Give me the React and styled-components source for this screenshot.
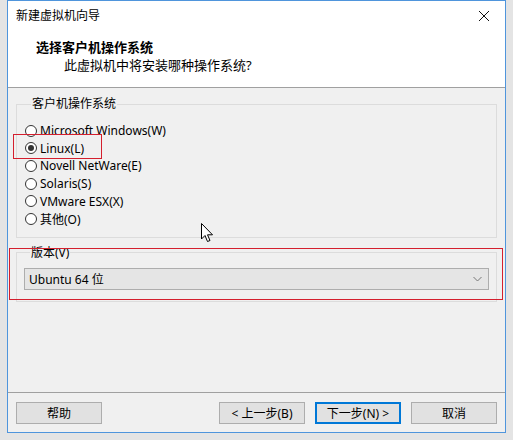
import React, { useState } from "react";
import styled, { createGlobalStyle } from "styled-components";

const GlobalStyle = createGlobalStyle`
  html, body {
    margin: 0;
    padding: 0;
    background: #e4e4e4;
  }
  body {
    font-family: "Noto Sans", "Noto Sans CJK SC", sans-serif;
    font-size: 12px;
    color: #000;
  }
`;

const osList = [
  "Microsoft Windows(W)",
  "Linux(L)",
  "Novell NetWare(E)",
  "Solaris(S)",
  "VMware ESX(X)",
  "其他(O)",
];

const Page = styled.div`
  width: 513px;
  height: 440px;
  overflow: hidden;
  background: #e4e4e4;
`;

const Window = styled.div`
  position: relative;
  box-sizing: border-box;
  margin-left: 7px;
  width: 499px;
  height: 433px;
  border: 1px solid #4f95dc;
  background: #f0f0f0;
  display: flex;
  flex-direction: column;
`;

const TitleBar = styled.div`
  height: 29px;
  background: #fff;
  display: flex;
  align-items: center;
  justify-content: space-between;
  padding: 0 8px 0 8px;
  font-size: 12px;
  line-height: 1;
`;

const CloseBtn = styled.svg`
  width: 12px;
  height: 12px;
  margin-right: 7px;
`;

const Header = styled.div`
  height: 58px;
  background: #fff;
  border-bottom: 1px solid #a0a0a0;
  box-sizing: border-box;
  display: flex;
  flex-direction: column;
  padding: 9px 0 0 28px;
`;

const HeaderTitle = styled.div`
  font-weight: bold;
  font-size: 13px;
  line-height: 16px;
`;

const HeaderSub = styled.div`
  font-size: 13px;
  line-height: 16px;
  margin-top: 2px;
  padding-left: 28px;
`;

const Body = styled.div`
  flex: 1;
  padding: 9px 8px 0 8px;
  display: flex;
  flex-direction: column;
  gap: 8px;
`;

const Group = styled.fieldset`
  margin: 0;
  border: 1px solid #dcdcdc;
  padding: ${(p) => p.$pad};
  min-inline-size: 0;
`;

const Legend = styled.legend`
  margin-left: 6px;
  padding: 0 1px;
  font-size: 12px;
  line-height: 14px;
`;

const RadioRow = styled.label`
  display: flex;
  align-items: center;
  height: 17.6px;
  gap: 3px;
  white-space: nowrap;
`;

const RadioDot = styled.span`
  box-sizing: border-box;
  width: 12px;
  height: 12px;
  border-radius: 50%;
  border: 1px solid #333;
  background: #fff;
  display: flex;
  align-items: center;
  justify-content: center;

  &::after {
    content: "";
    width: 6px;
    height: 6px;
    border-radius: 50%;
    background: ${(p) => (p.$on ? "#333" : "transparent")};
  }
`;

const Combo = styled.div`
  box-sizing: border-box;
  height: 22px;
  background: #e5e5e5;
  border: 1px solid #adadad;
  display: flex;
  align-items: center;
  justify-content: space-between;
  padding: 0 6px 0 4px;
  font-size: 12px;
`;

const Footer = styled.div`
  border-top: 1px solid #a0a0a0;
  height: 40px;
  box-sizing: border-box;
  padding: 9px 8px 0 8px;
  display: flex;
  gap: 10px;
`;

const Button = styled.button`
  box-sizing: border-box;
  width: 86px;
  height: 22px;
  font-family: inherit;
  font-size: 12px;
  background: #e1e1e1;
  color: #000;
  border: ${(p) => (p.$primary ? "2px solid #0078d7" : "1px solid #adadad")};
  padding: 0;
  margin-left: ${(p) => (p.$push ? "auto" : "0")};
`;

const Highlight = styled.div`
  position: absolute;
  border: 1px solid #d41f2e;
  box-sizing: border-box;
  pointer-events: none;
`;

const Cursor = styled.svg`
  position: absolute;
  left: 193px;
  top: 222px;
  width: 13px;
  height: 20px;
`;

export default function App() {
  const [os, setOs] = useState(1);

  return (
    <>
      <GlobalStyle />
      <Page>
        <Window>
          <TitleBar>
            <span>新建虚拟机向导</span>
            <CloseBtn viewBox="0 0 12 12">
              <path d="M1 1 L11 11 M11 1 L1 11" stroke="#111" strokeWidth="1" />
            </CloseBtn>
          </TitleBar>
          <Header>
            <HeaderTitle>选择客户机操作系统</HeaderTitle>
            <HeaderSub>此虚拟机中将安装哪种操作系统?</HeaderSub>
          </Header>
          <Body>
            <Group $pad="11px 0 9px 8px">
              <Legend>客户机操作系统</Legend>
              {osList.map((name, i) => (
                <RadioRow key={name} onClick={() => setOs(i)}>
                  <RadioDot $on={os === i} />
                  {name}
                </RadioRow>
              ))}
            </Group>
            <Group $pad="8px 7px 11px 7px">
              <Legend>版本(V)</Legend>
              <Combo>
                <span>Ubuntu 64 位</span>
                <svg width="9" height="6" viewBox="0 0 9 6">
                  <path d="M0.5 1 L4.5 5 L8.5 1" fill="none" stroke="#777" strokeWidth="1" />
                </svg>
              </Combo>
            </Group>
          </Body>
          <Footer>
            <Button>帮助</Button>
            <Button $push>&lt; 上一步(B)</Button>
            <Button $primary>下一步(N) &gt;</Button>
            <Button>取消</Button>
          </Footer>

          <Highlight style={{ left: 5, top: 133, width: 89, height: 25 }} />
          <Highlight style={{ left: 1, top: 247, width: 494, height: 52 }} />
          <Cursor viewBox="0 0 13 20">
            <path
              d="M0.5 0.5 L0.5 16 L4 12.5 L6.5 18.5 L9 17.5 L6.5 11.8 L11.5 11.8 Z"
              fill="#fff"
              stroke="#000"
              strokeWidth="1"
              strokeLinejoin="round"
            />
          </Cursor>
        </Window>
      </Page>
    </>
  );
}
